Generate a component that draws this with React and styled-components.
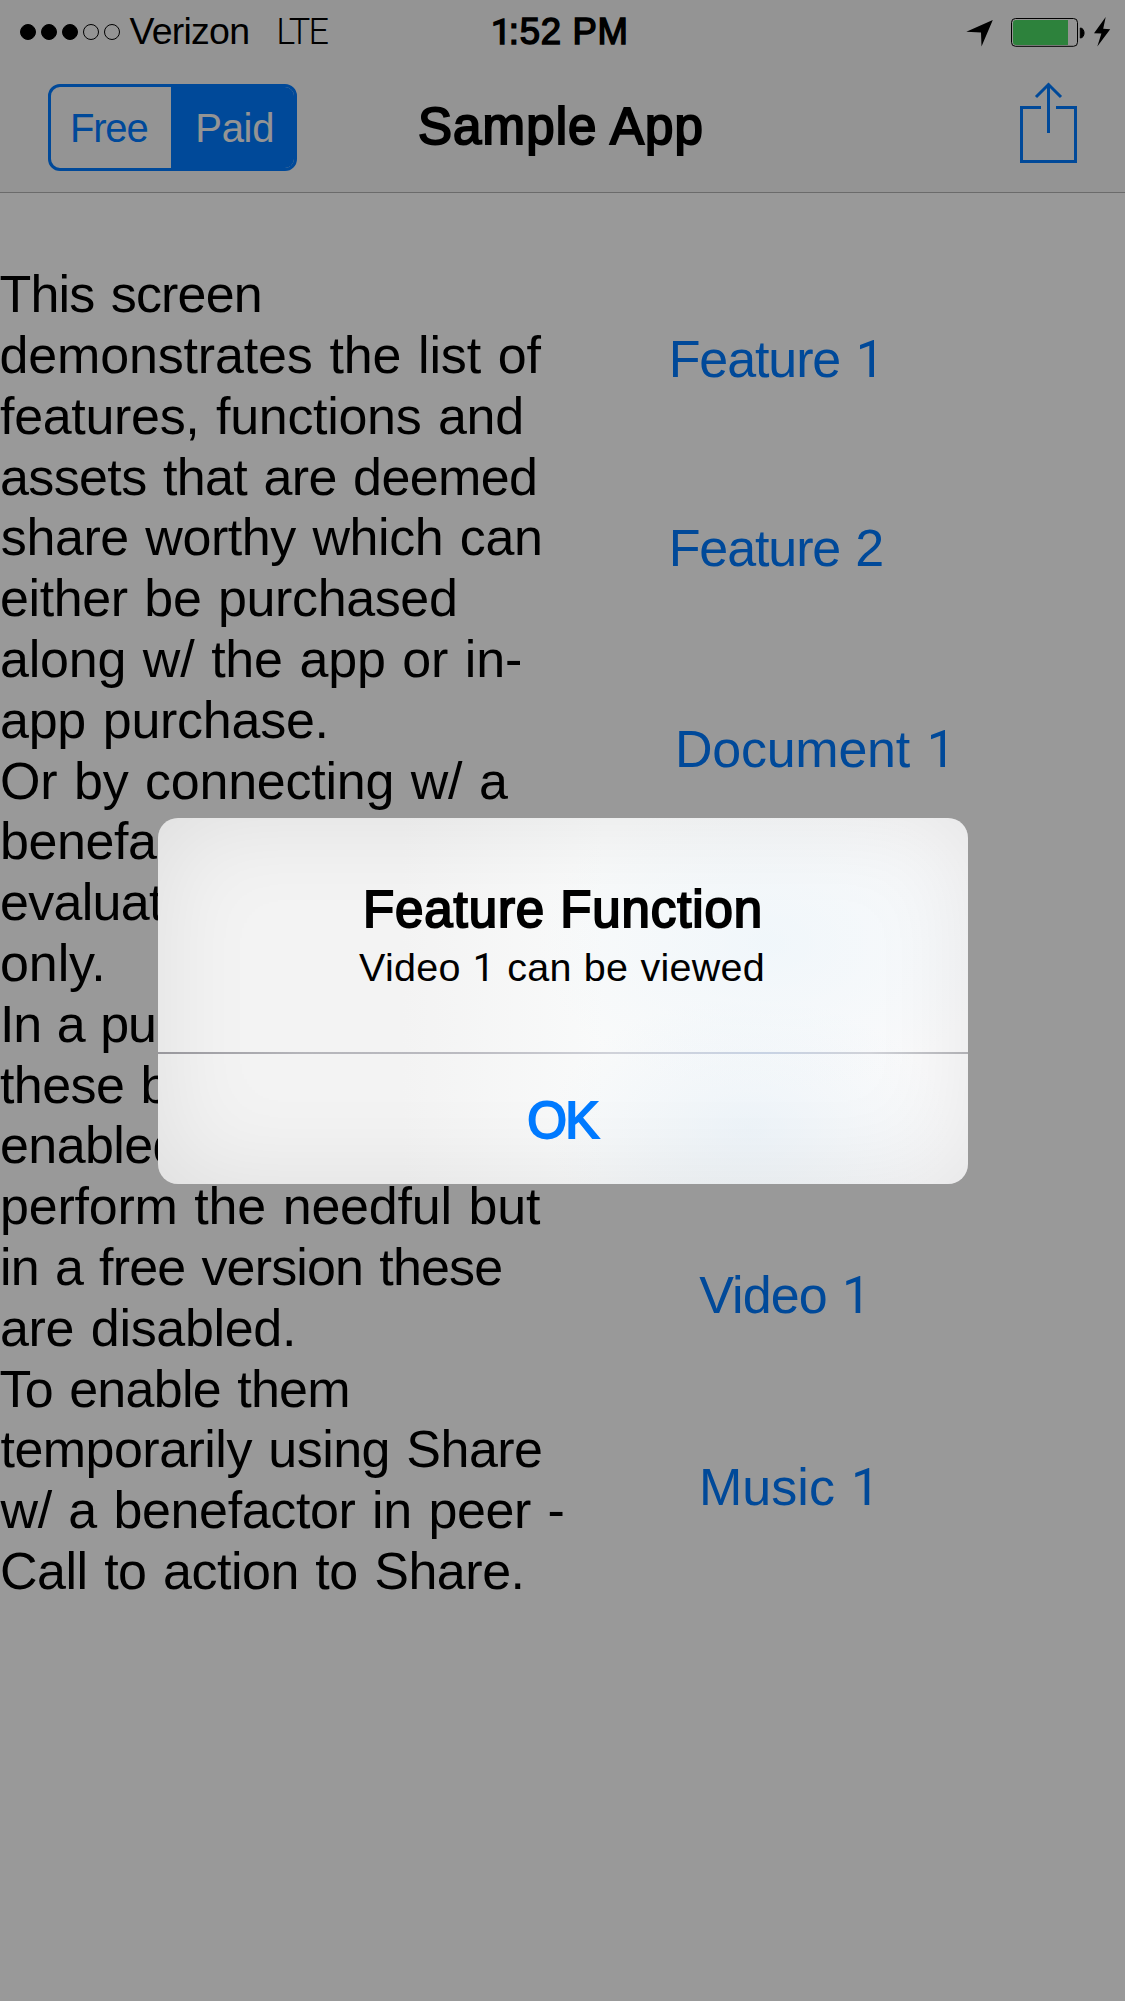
import React from "react";
import styled, { createGlobalStyle } from "styled-components";

const GlobalStyle = createGlobalStyle`
  * { box-sizing: border-box; }
  body { margin: 0; background: #fff; }
  button { appearance: none; border: 0; margin: 0; padding: 0; background: none; font: inherit; color: inherit; text-align: left; }
`;

const Screen = styled.div`
  position: relative;
  width: 1125px;
  height: 2001px;
  overflow: hidden;
  display: flex;
  flex-direction: column;
  background: #fff;
  color: #000;
  font-family: "Liberation Sans", Arial, sans-serif;
  font-size: 52px;
  white-space: pre;
`;

const Top = styled.header`
  height: 193px;
  background: #f7f7f7;
  border-bottom: 1px solid #b2b2b2;
`;

const StatusBar = styled.div`
  height: 60px;
  display: grid;
  grid-template-columns: 491px 1fr auto;
  align-items: center;
  font-size: 37.5px;
  line-height: 62px;
`;

const Carrier = styled.div`
  display: flex;
  align-items: baseline;
  padding-left: 20px;
`;

const Signal = styled.div`
  display: flex;
  gap: 5px;
  align-self: center;
  margin-right: 9.5px;
`;

const Dot = styled.i`
  width: 16px;
  height: 16px;
  border-radius: 50%;
  border: 1px solid #000;
  background: ${(p) => (p.$on ? "#000" : "transparent")};
`;

const CarrierName = styled.span`
  letter-spacing: -0.75px;
  margin-right: 27px;
`;

const Network = styled.span`
  font-family: Roboto, sans-serif;
  font-weight: 300;
  font-size: 36px;
  letter-spacing: -1.8px;
`;

const One = styled.span`
  font-family: Roboto, sans-serif;
  font-size: 0.985em;
  line-height: 0;
`;

const Clock = styled.time`
  font-size: 36.5px;
  -webkit-text-stroke: 1.5px currentColor;
  letter-spacing: 0.7px;
  ${One} { letter-spacing: -2.4px; }
`;

const StatusIcons = styled.div`
  height: 60px;
  svg { display: block; }
`;

const NavBar = styled.nav`
  display: flex;
  align-items: flex-start;
  height: 132px;
  padding: 24px 48px 0;
`;

const Segmented = styled.div`
  display: flex;
  width: 249px;
  height: 87px;
  border: 3px solid #007aff;
  border-radius: 12px;
  overflow: hidden;
  font-size: 40px;
  line-height: 82px;
`;

const Segment = styled.button`
  flex: ${(p) => (p.$selected ? "1" : "0 0 120px")};
  height: 81px;
  padding-left: ${(p) => (p.$selected ? 24.3 : 19)}px;
  background: ${(p) => (p.$selected ? "#007aff" : "transparent")};
  color: ${(p) => (p.$selected ? "#f7f7f7" : "#007aff")};
  letter-spacing: ${(p) => (p.$selected ? -0.3 : -1.2)}px;
`;

const NavTitle = styled.h1`
  margin: 0 0 0 121px;
  font-size: 51px;
  font-weight: 400;
  line-height: 86px;
  letter-spacing: 1.1px;
  -webkit-text-stroke: 2px currentColor;
`;

const ShareButton = styled.button`
  margin: -2px 0 0 auto;
  svg { display: block; }
`;

const Content = styled.main`
  display: flex;
`;

const Description = styled.div`
  width: 600px;
  padding-top: 71.3px;
  line-height: 60.81px;
  word-spacing: 2.5px;
`;

const Line = styled.div`
  height: 60.81px;
  letter-spacing: ${(p) => p.$track}px;
  text-indent: ${(p) => p.$indent || 0}px;
`;

const Features = styled.div`
  display: flex;
  flex-direction: column;
  padding-top: 136.2px;
  line-height: 60px;
  color: #007aff;
`;

const FeatureLink = styled.button`
  height: 60px;
  margin-top: ${(p) => p.$gap}px;
  padding-left: ${(p) => p.$inset}px;
  letter-spacing: ${(p) => p.$track}px;
  word-spacing: ${(p) => p.$space}px;
`;

const Dim = styled.div`
  position: absolute;
  inset: 0;
  display: flex;
  align-items: center;
  justify-content: center;
  padding: 1px 0 0 1px;
  background: rgba(0, 0, 0, 0.4);
`;

const Alert = styled.section`
  width: 810px;
  height: 366px;
  border-radius: 20px;
  overflow: hidden;
  text-align: center;
  background:
    radial-gradient(ellipse 230px 150px at 610px 125px, rgba(234, 244, 251, 0.6), rgba(234, 244, 251, 0) 100%),
    radial-gradient(ellipse 200px 130px at 590px 310px, rgba(230, 240, 248, 0.6), rgba(230, 240, 248, 0) 100%),
    linear-gradient(90deg, #f3f3f3 0%, #f3f3f3 30%, #f9fafa 55%, #fafafb 100%);
  box-shadow: inset 0 0 100px rgba(0, 0, 0, 0.09);
`;

const AlertBody = styled.div`
  height: 234px;
  padding-top: 59.5px;
`;

const AlertTitle = styled.h2`
  margin: 0;
  font-size: 51px;
  font-weight: 400;
  line-height: 64px;
  letter-spacing: 0.9px;
  -webkit-text-stroke: 2px currentColor;
`;

const AlertMessage = styled.p`
  margin: 0;
  padding-right: 2px;
  font-size: 39.5px;
  line-height: 51.4px;
  letter-spacing: 0.25px;
  word-spacing: 1px;
`;

const Divider = styled.div`
  height: 2px;
  background: linear-gradient(90deg, #98979c 0%, #b5b5ba 18%, #bbbbc1 38%, #d0d2d9 56%, #c8d3e4 75%, #d0d2d8 88%, #b0b0b4 100%);
`;

const AlertButton = styled.button`
  width: 100%;
  height: 130px;
  padding: 0 1px 0 0;
  text-align: center;
  font-size: 51px;
  line-height: 134px;
  color: #007aff;
  letter-spacing: -1.6px;
  -webkit-text-stroke: 2px currentColor;
`;

const lines = [
  ["This screen", -0.8, -0.5],
  ["demonstrates the list of", -0.16, -0.5],
  ["features, functions and", -0.32, 0],
  ["assets that are deemed", -0.62],
  ["share worthy which can", -0.42, 0.8],
  ["either be purchased", -0.38],
  ["along w/ the app or in-", -0.22],
  ["app purchase.", -0.25],
  ["Or by connecting w/ a", -0.25],
  ["benefactor", -0.45],
  ["evaluation", -0.7],
  ["only.", -0.1],
  ["In a pu", -1.2],
  ["these b", -0.6],
  ["enabled", -0.6],
  ["perform the needful but", -0.22],
  ["in a free version these", -0.84],
  ["are disabled.", -0.32],
  ["To enable them", -0.73, -0.5],
  ["temporarily using Share", -0.53, 0.5],
  ["w/ a benefactor in peer -", -0.37, 0.5],
  ["Call to action to Share.", -0.48],
];

const features = [
  { name: "Feature", number: 1, gap: 0, inset: 68.7, track: -1.1, space: 2.2 },
  { name: "Feature", number: 2, gap: 129, inset: 68.7, track: -1.1, space: 1.7 },
  { name: "Document", number: 1, gap: 140.7, inset: 75, track: -0.26, space: 2.7 },
  { name: "Video", number: 1, gap: 486.3, inset: 99.3, track: -0.92, space: 1.8 },
  { name: "Music", number: 1, gap: 132, inset: 99, track: 0.04, space: 1.6 },
];

function DeviceIcons() {
  return (
    <svg width="165" height="60" viewBox="960 0 165 60">
      <path d="M992.8 18 966.3 29.7 981 30.6 981.5 44.5Z" />
      <rect x="1011.5" y="16.5" width="66" height="27.8" rx="4" fill="none" stroke="#000" />
      <path d="M1016 18h52v25h-52a3 3 0 0 1-3-3V21a3 3 0 0 1 3-3Z" fill="#4cd964" />
      <path d="M1080 26c5 0 5 10 0 10Z" stroke="#000" strokeLinejoin="round" transform="translate(.3 0)" />
      <path d="M1105.7 15 1094 31.2 1101.4 31.6 1097.3 44.4 1110.2 27.2 1103.2 26.8Z" />
    </svg>
  );
}

function ShareIcon() {
  return (
    <svg width="57" height="81" viewBox="0 0 57 81" fill="none" stroke="#007aff" strokeWidth="3">
      <path d="M21 25.5H1.5v54h54v-54H36" />
      <path d="M28.5 51V3M16 15 28.5 2.5 41 15" />
    </svg>
  );
}

export default function App() {
  return (
    <Screen>
      <GlobalStyle />
      <Top>
        <StatusBar>
          <Carrier>
            <Signal>
              {[1, 1, 1, 0, 0].map((on, i) => (
                <Dot key={i} $on={on} />
              ))}
            </Signal>
            <CarrierName>Verizon</CarrierName>
            <Network>LTE</Network>
          </Carrier>
          <Clock><One>1</One>:52 PM</Clock>
          <StatusIcons>
            <DeviceIcons />
          </StatusIcons>
        </StatusBar>
        <NavBar>
          <Segmented>
            <Segment>Free</Segment>
            <Segment $selected>Paid</Segment>
          </Segmented>
          <NavTitle>Sample App</NavTitle>
          <ShareButton aria-label="Share">
            <ShareIcon />
          </ShareButton>
        </NavBar>
      </Top>
      <Content>
        <Description>
          {lines.map(([text, track, indent]) => (
            <Line key={text} $track={track} $indent={indent}>{text}</Line>
          ))}
        </Description>
        <Features>
          {features.map((f) => (
            <FeatureLink key={f.name + f.number} $gap={f.gap} $inset={f.inset} $track={f.track} $space={f.space}>
              {f.name} {f.number === 1 ? <One>1</One> : f.number}
            </FeatureLink>
          ))}
        </Features>
      </Content>
      <Dim>
        <Alert role="alertdialog">
          <AlertBody>
            <AlertTitle>Feature Function</AlertTitle>
            <AlertMessage>Video <One>1</One> can be viewed</AlertMessage>
          </AlertBody>
          <Divider />
          <AlertButton>OK</AlertButton>
        </Alert>
      </Dim>
    </Screen>
  );
}
